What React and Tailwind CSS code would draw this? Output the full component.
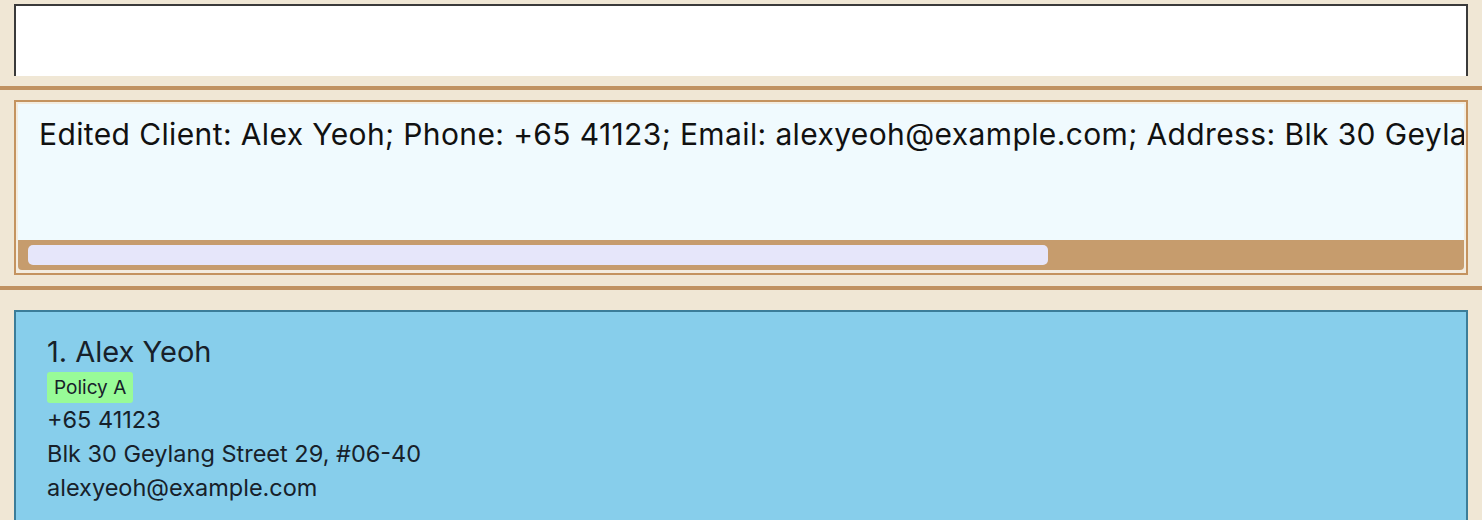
import React from 'react';

const resultText =
    'Edited Client: Alex Yeoh; Phone: +65 41123; Email: alexyeoh@example.com; Address: Blk 30 Geylang Street 29, #06-40; Policies: [Policy A]';

const client = {
    index: 1,
    name: 'Alex Yeoh',
    tags: ['Policy A'],
    phone: '+65 41123',
    address: 'Blk 30 Geylang Street 29, #06-40',
    email: 'alexyeoh@example.com',
};

const App = () => {
    return (
        <div className="h-[520px] w-full overflow-hidden bg-[#f0e7d5] font-['Inter',sans-serif]">
            {/* command box */}
            <div className="px-[14px] pt-[4px]">
                <div className="h-[72px] border-x-2 border-t-2 border-[#3a3a3a] bg-white" />
            </div>

            <div className="mt-[10px] h-[4px] bg-[#c09262]" />

            {/* result display, scrolled horizontally */}
            <div className="mx-[14px] mt-[10px] border-2 border-[#c4935f] bg-[#f3ecdf] p-[2px] pb-[3px]">
                <div className="h-[136px] overflow-hidden whitespace-nowrap bg-[#f0fafe] pl-[21px] pt-[12px] text-[30px] leading-[36px] tracking-[0.38px] text-[#111]">
                    {resultText}
                </div>
                <div className="flex h-[30px] items-center rounded-b-[4px] bg-[#c69c6d] px-[10px]">
                    <div className="h-[20px] w-[1020px] rounded-[5px] bg-[#e6e6fa]" />
                </div>
            </div>

            <div className="mt-[11px] h-[4px] bg-[#c09262]" />

            {/* client list */}
            <div className="mx-[14px] mt-[20px] h-[220px] border-2 border-[#3b7d99] bg-[#87ceeb] pl-[31px] pt-[22px] text-[#17212a]">
                <div className="text-[29px] leading-[36px]">
                    {client.index}. {client.name}
                </div>
                <div className="mt-[2px] flex gap-2">
                    {client.tags.map(tag => (
                        <span key={tag} className="rounded-[3px] bg-[#98fb98] px-[7px] text-[19px] leading-[31px]">
                            {tag}
                        </span>
                    ))}
                </div>
                <div className="text-[23.5px] leading-[34px]">{client.phone}</div>
                <div className="text-[23.5px] leading-[34px]">{client.address}</div>
                <div className="text-[23.5px] leading-[34px]">{client.email}</div>
            </div>
        </div>
    );
};

export default App;
